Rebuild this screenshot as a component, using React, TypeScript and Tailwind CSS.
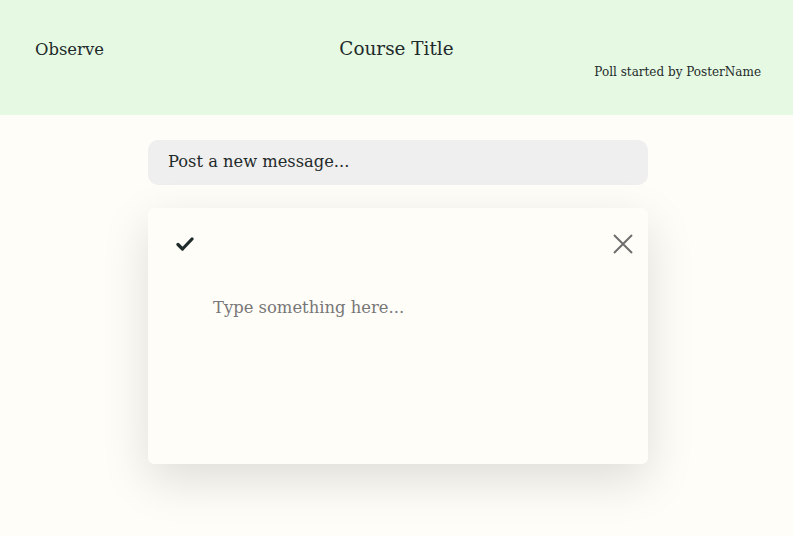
const serif = { fontFamily: '"DejaVu Serif", "Liberation Serif", serif' };

export default function App() {
  return (
    <div
      className="min-h-[536px] w-full bg-[#fffdf8] text-[#1f2a2a]"
      style={serif}
    >
      <header className="h-[115px] bg-[#e5f9e3] grid grid-cols-3 px-[32px]">
        <div className="pt-[38px] pl-[3px] text-[16.4px]">Observe</div>
        <div className="pt-[35px] text-center text-[18.4px]">Course Title</div>
        <div className="pt-[63px] text-right text-[12px]">
          Poll started by PosterName
        </div>
      </header>
      <main className="w-[500px] ml-[148px] pt-[25px]">
        <div className="h-[45px] rounded-[10px] bg-[#efefef] px-[20px] flex items-center text-[16.3px]">
          Post a new message...
        </div>
        <div className="mt-[23px] h-[256px] rounded-[6px] bg-[#fffdf8] shadow-[0_16px_48px_rgba(0,0,0,0.13)]">
          <div className="flex justify-between items-start pt-[25px] pl-[28px] pr-[14px]">
            <svg width="18" height="16" viewBox="0 0 18 16" className="mt-[3px]">
              <path
                d="M2 8.5 L6.5 13 L16 3"
                fill="none"
                stroke="#1f2a2a"
                strokeWidth="3.2"
                strokeLinecap="round"
                strokeLinejoin="round"
              />
            </svg>
            <svg width="22" height="22" viewBox="0 0 22 22">
              <path
                d="M2 2 L20 20 M20 2 L2 20"
                fill="none"
                stroke="#6e6e6e"
                strokeWidth="2"
              />
            </svg>
          </div>
          <div className="pl-[65px] pt-[41px] text-[16.4px] text-[#777]">
            Type something here...
          </div>
        </div>
      </main>
    </div>
  );
}
